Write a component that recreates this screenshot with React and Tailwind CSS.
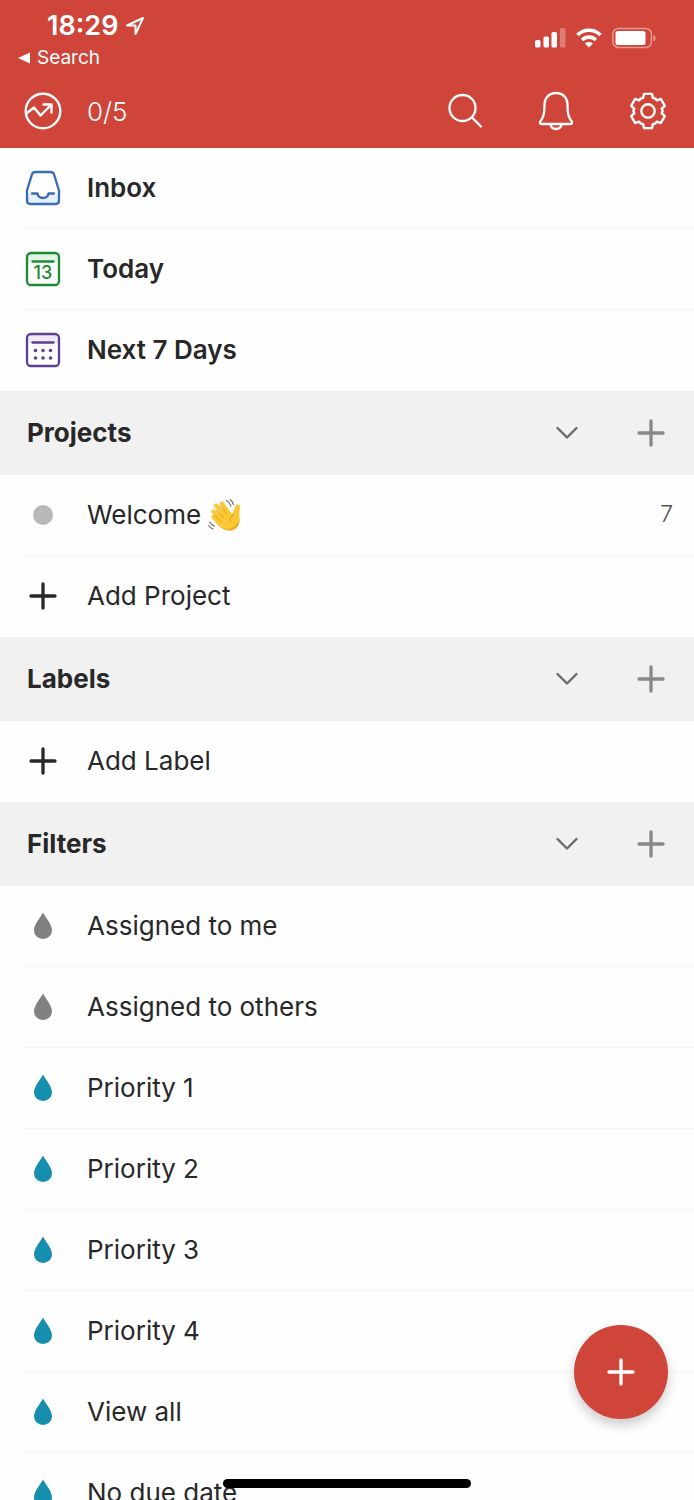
import { useState } from "react";

const DROP = "M10 0.5C12.5 5.5 19 12 19 18.5A9 8.5 0 0 1 1 18.5C1 12 7.5 5.5 10 0.5Z";

// six teeth, [angle, radius] pairs around the tooth axis
const TOOTH = [[-21, 13.8], [-13, 17.6], [13, 17.6], [21, 13.8], [30, 14.6]];
const GEAR = [0, 60, 120, 180, 240, 300]
  .flatMap((base) => TOOTH.map(([a, r]) => {
    const t = ((base + a - 90) * Math.PI) / 180;
    return (19 + r * Math.cos(t)).toFixed(2) + "," + (19 + r * Math.sin(t)).toFixed(2);
  }))
  .join(" ");

const VIEWS = [
  { label: "Inbox", icon: InboxIcon },
  { label: "Today", icon: TodayIcon },
  { label: "Next 7 Days", icon: WeekIcon },
];

const FILTERS = [
  { label: "Assigned to me", color: "text-[#808080]" },
  { label: "Assigned to others", color: "text-[#808080]" },
  { label: "Priority 1", color: "text-[#158fad]" },
  { label: "Priority 2", color: "text-[#158fad]" },
  { label: "Priority 3", color: "text-[#158fad]" },
  { label: "Priority 4", color: "text-[#158fad]" },
  { label: "View all", color: "text-[#158fad]" },
  { label: "No due date", color: "text-[#158fad]" },
];

function InboxIcon() {
  return (
    <svg width="36" height="36" viewBox="0 0 36 36" fill="none" stroke="#3a6db5" strokeWidth="2.300" strokeLinecap="round" strokeLinejoin="round">
      <path d="M3 24h9c2 6.500 10 6.500 12 0h9v6c0 3-1 4-4 4H7c-3 0-4-1-4-4z" fill="#e6f0fb" stroke="none" />
      <path d="M10.500 2h15c2 0 3.200 1 3.700 2.800L34 20.500V30.500c0 2.200-1.300 3.500-3.500 3.500h-25C3.300 34 2 32.700 2 30.500V20.500L6.800 4.800C7.300 3 8.500 2 10.500 2z" />
      <path d="M7 23.500h5.500c1 6 10 6 11 0H29" />
    </svg>
  );
}

function TodayIcon() {
  return (
    <svg width="36" height="36" viewBox="0 0 36 36" fill="none" stroke="#1f8a34" strokeWidth="2.300" strokeLinecap="round">
      <path d="M3 3h30v8H3z" fill="#e3f3e6" stroke="none" />
      <rect x="2" y="2" width="32" height="32" rx="4" />
      <path d="M7.500 10.500h21" />
      <text x="18" y="28" textAnchor="middle" fill="#1f8a34" stroke="none" className="font-['Inter'] text-[18px] font-medium">13</text>
    </svg>
  );
}

function WeekIcon() {
  return (
    <svg width="36" height="36" viewBox="0 0 36 36" fill="none" stroke="#5d3f96" strokeWidth="2.300" strokeLinecap="round">
      <path d="M3 3h30v8H3z" fill="#efe9f7" stroke="none" />
      <rect x="2" y="2" width="32" height="32" rx="4" />
      <path d="M7.500 10.500h21" />
      <g fill="#5d3f96" stroke="none">
        {[10.5, 18, 25.5].map((x) => [18.5, 26].map((y) => <circle key={x + "-" + y} cx={x} cy={y} r="1.800" />))}
      </g>
    </svg>
  );
}

function PlusIcon({ className = "" }) {
  return (
    <svg width="28" height="28" viewBox="0 0 28 28" fill="none" stroke="currentColor" strokeWidth="3.300" strokeLinecap="round" className={className}>
      <path d="M14 2v24M2 14h24" />
    </svg>
  );
}

function WaveEmoji() {
  return (
    <svg role="img" aria-label="waving hand" width="36" height="36" viewBox="0 0 36 36" fill="none" strokeLinecap="round" strokeLinejoin="round">
      <path d="M8 20L19 10L25 17C27 14.500 27.500 12 28.500 9C29.500 6.500 33.500 7.500 33 10C32.500 13.500 32 17 32.500 21C33 28 28.500 33.500 22.500 33.500C17 33.500 13 30.500 8 25Z" fill="#fcc736" />
      <g stroke="#fcc736" strokeWidth="4.300">
        <path d="M14 27.500L6.500 20M15 23L6.500 14.500M18 19L9 8.500M22 17L15 6.500" />
      </g>
      <path d="M13 29.500c7 5 17 2 19.500-8 .8 7.500-4 12-10 12-3.800 0-6.500-1.500-9.500-4z" fill="#efa722" />
      <path d="M7.500 18.500l7 6.500M9 13l8 8M13 8.500l7.500 9M23 24.500c0-3 1-5.500 3.500-7.500" stroke="#e09a1a" strokeWidth="0.900" />
      <path d="M19.500 3.500c2 1 3.500 3 4.500 5.500M23 2.500c1.800 1.200 2.800 2.800 3.500 5M2.500 25c1 1.800 2.800 3.200 5 4M1.500 28.500c1 1.500 2.500 2.700 4.500 3.500" stroke="#6d6664" strokeWidth="1.100" />
    </svg>
  );
}

function StatusBar() {
  return (
    <div className="flex h-[74px] items-start justify-between pr-[38px] pl-[18px]">
      <div>
        <div className="flex h-[38px] items-center gap-[7px] pt-[14px] pl-[29px]">
          <span className="text-[27px] leading-[24px] font-semibold">18:29</span>
          <svg width="20" height="20" viewBox="0 0 20 20" fill="none" stroke="currentColor" strokeWidth="2" strokeLinejoin="round">
            <path d="M18 2L2 9.500h8.500V18z" />
          </svg>
        </div>
        <a href="#search" className="flex h-10 items-center gap-[6px] text-[19px]">
          <svg width="13" height="12" viewBox="0 0 13 12" fill="currentColor"><path d="M0 6L12 0.500v11z" /></svg>
          Search
        </a>
      </div>
      <div className="flex h-[76px] items-center gap-[10px]">
        <svg width="32" height="20" viewBox="0 0 32 20" fill="currentColor">
          <rect x="1" y="12" width="5.500" height="7.500" rx="1.500" />
          <rect x="9.500" y="8.500" width="5.500" height="11" rx="1.500" />
          <rect x="17.500" y="4" width="5.500" height="15.500" rx="1.500" />
          <rect x="26" y="0" width="5.500" height="19.500" rx="1.500" opacity="0.300" />
        </svg>
        <svg width="26" height="20" viewBox="0 0 26 20" fill="none" stroke="currentColor" strokeWidth="3.600">
          <path d="M1.500 7C8 0.700 18 0.700 24.500 7" />
          <path d="M6 12c4-3.800 10-3.800 14 0" />
          <path d="M13 19.500l-4-4c2.300-2 5.700-2 8 0z" fill="currentColor" stroke="none" />
        </svg>
        <svg width="44" height="22" viewBox="0 0 44 22" fill="none">
          <rect x="0.900" y="1.500" width="38.500" height="19" rx="5.500" stroke="currentColor" strokeWidth="1.500" opacity="0.450" />
          <rect x="3.500" y="4" width="30" height="14" rx="2.500" fill="currentColor" />
          <path d="M41.500 8c2.700 1 2.700 5.500 0 6.500z" fill="currentColor" opacity="0.500" />
        </svg>
      </div>
    </div>
  );
}

function Header() {
  return (
    <header className="h-[148px] bg-[#d0453a] text-white">
      <StatusBar />
      <div className="flex h-[74px] items-center pr-[27px] pl-6">
        <button className="flex items-center gap-[25px] text-[26px]">
          <svg width="38" height="38" viewBox="0 0 38 38" fill="none" stroke="currentColor" strokeWidth="2.400" strokeLinecap="round" strokeLinejoin="round">
            <circle cx="19" cy="19" r="17.300" />
            <path d="M3 21l7-5.500 6.500 8L27 13M19.500 12.500h8v8" />
          </svg>
          <span className="font-light">0/5</span>
        </button>
        <div className="ml-auto flex items-center gap-[55px]">
          <button aria-label="Search">
            <svg width="36" height="38" viewBox="0 0 36 38" fill="none" stroke="currentColor" strokeWidth="2.300" strokeLinecap="round">
              <circle cx="15.500" cy="16" r="13" />
              <path d="M25 25.500l9 9" />
            </svg>
          </button>
          <button aria-label="Notifications">
            <svg width="36" height="40" viewBox="0 0 36 40" fill="none" stroke="currentColor" strokeWidth="2.300" strokeLinecap="round" strokeLinejoin="round">
              <path d="M18 2C11 2 6.500 7 6.500 14c0 9-1 12-4.200 16.500-.9 1.500-.2 2.500 1.200 2.500h29c1.400 0 2.100-1 1.200-2.500C30.500 26 29.500 23 29.500 14 29.500 7 25 2 18 2z" />
              <path d="M12.500 33.500c1 6 10 6 11 0" />
            </svg>
          </button>
          <button aria-label="Settings">
            <svg width="38" height="38" viewBox="0 0 38 38" fill="none" stroke="currentColor" strokeWidth="2.400" strokeLinejoin="round">
              <polygon points={GEAR} />
              <circle cx="19" cy="19" r="6.700" />
            </svg>
          </button>
        </div>
      </div>
    </header>
  );
}

function Section({ title, children }) {
  const [open, setOpen] = useState(true);
  return (
    <section>
      <div className="flex h-[84px] items-center bg-[#f1f1f1] pr-[29px] pb-px pl-[27px]">
        <h2 className="flex-1 text-[26px] font-bold">{title}</h2>
        <button aria-label={"Toggle " + title} onClick={() => setOpen((o) => !o)} className="mr-[58px] text-[#6b6b6b]">
          <svg width="24" height="24" viewBox="0 0 24 24" fill="none" stroke="currentColor" strokeWidth="2.400" strokeLinecap="round" strokeLinejoin="round">
            <path d="M2.500 7l9.500 9.500L21.500 7" />
          </svg>
        </button>
        <button aria-label={"Add to " + title} className="text-[#888]"><PlusIcon /></button>
      </div>
      {open && <ul>{children}</ul>}
    </section>
  );
}

function Row({ icon, label, count, emoji, bold, last }) {
  return (
    <li className="pl-5">
      <button className={"flex h-[81px] w-full items-center border-b pr-[21px] pb-px text-left text-[26px] " + (last ? "border-transparent " : "border-[#f4f4f4] ") + (bold ? "font-semibold" : "")}>
        <span className="mr-[21px] flex w-[46px] justify-center">{icon}</span>
        <span>{label}</span>
        {emoji && <span className="ml-[6px]">{emoji}</span>}
        {count && <span className="ml-auto text-[23px] font-light text-[#555]">{count}</span>}
      </button>
    </li>
  );
}

function Drop({ color }) {
  return <svg width="20" height="28" viewBox="0 0 20 28" fill="currentColor" className={color}><path d={DROP} /></svg>;
}

export default function App() {
  return (
    <div className="relative h-screen overflow-hidden bg-[#fefefe] font-['Inter','Liberation_Sans',sans-serif] text-[#282828]">
      <Header />
      <main>
        <ul>
          {VIEWS.map((v, i) => (
            <Row key={v.label} label={v.label} icon={<v.icon />} bold last={i === VIEWS.length - 1} />
          ))}
        </ul>
        <Section title="Projects">
          <Row label="Welcome" emoji={<WaveEmoji />} count="7" icon={<span className="size-5 rounded-full bg-[#b8b8b8]" />} />
          <Row label="Add Project" icon={<PlusIcon />} last />
        </Section>
        <Section title="Labels">
          <Row label="Add Label" icon={<PlusIcon />} last />
        </Section>
        <Section title="Filters">
          {FILTERS.map((f) => <Row key={f.label} label={f.label} icon={<Drop color={f.color} />} />)}
        </Section>
      </main>

      {/* Floating add button */}
      <button aria-label="Add task" className="absolute right-[26px] bottom-[81px] flex size-[94px] items-center justify-center rounded-full bg-[#d0453a] text-white shadow-[0_6px_12px_rgba(0,0,0,0.2)]">
        <PlusIcon />
      </button>

      {/* Home indicator */}
      <div className="absolute bottom-3 left-1/2 h-[9px] w-[248px] -translate-x-1/2 rounded-full bg-black" />
    </div>
  );
}
